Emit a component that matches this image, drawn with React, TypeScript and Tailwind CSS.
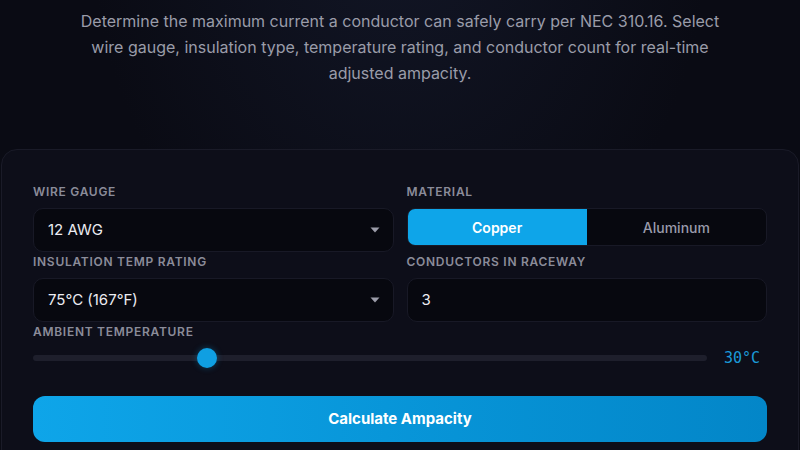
import { useState } from "react";

const labelCls =
  "mb-2 block text-[12px] font-semibold uppercase leading-4 tracking-[0.06em] text-[#8b8c99]";

function Caret() {
  return (
    <svg width="10" height="6" viewBox="0 0 10 6" className="shrink-0">
      <path d="M0.5 0.5h9L5 5.5z" fill="#9c9daa" />
    </svg>
  );
}

function SelectBox({ value }: { value: string }) {
  return (
    <div className="flex h-[44px] items-center justify-between rounded-[10px] border border-[#181926] bg-[#07080f] pl-[14px] pr-[13px] text-[15px] text-[#ececf2]">
      <span>{value}</span>
      <Caret />
    </div>
  );
}

export default function App() {
  const [material, setMaterial] = useState<"copper" | "aluminum">("copper");
  const temp = 30;
  const pct = ((temp - 10) / 80) * 100;

  return (
    <div
      className="h-[450px] w-[800px] overflow-hidden bg-[#0a0b14] bg-[radial-gradient(ellipse_at_50%_-20%,#121626_0%,#0a0b14_55%)] text-white"
      style={{ fontFamily: "Inter, 'Noto Sans', sans-serif" }}
    >
      <p className="mx-auto max-w-[660px] pt-2 text-center text-[16px] leading-[26px] text-[#9a9ca9]">
        Determine the maximum current a conductor can safely carry per NEC 310.16. Select wire
        gauge, insulation type, temperature rating, and conductor count for real-time adjusted
        ampacity.
      </p>

      <div className="mx-px mt-[63px] rounded-2xl border border-[#1a1b28] bg-[#0d0e19] px-[31px] pt-[34px] pb-8">
        <div className="grid grid-cols-2 gap-x-[13px] gap-y-0.5">
          <div>
            <label className={labelCls}>Wire Gauge</label>
            <SelectBox value="12 AWG" />
          </div>
          <div>
            <label className={labelCls}>Material</label>
            <div className="flex h-[38px] overflow-hidden rounded-lg border border-[#181926] bg-[#07080f] text-[14px]">
              <button
                type="button"
                onClick={() => setMaterial("copper")}
                className={
                  material === "copper"
                    ? "flex-1 bg-[#0ea5e9] font-semibold text-white"
                    : "flex-1 font-medium text-[#9a9bab]"
                }
              >
                Copper
              </button>
              <button
                type="button"
                onClick={() => setMaterial("aluminum")}
                className={
                  material === "aluminum"
                    ? "flex-1 bg-[#0ea5e9] font-semibold text-white"
                    : "flex-1 font-medium text-[#9a9bab]"
                }
              >
                Aluminum
              </button>
            </div>
          </div>
          <div>
            <label className={labelCls}>Insulation Temp Rating</label>
            <SelectBox value="75°C (167°F)" />
          </div>
          <div>
            <label className={labelCls}>Conductors in Raceway</label>
            <div className="flex h-[44px] items-center rounded-[10px] border border-[#181926] bg-[#07080f] pl-[14px] text-[15px] text-[#ececf2]">
              3
            </div>
          </div>
        </div>

        <div className="mt-0.5">
          <label className={labelCls}>Ambient Temperature</label>
          <div className="flex h-5 items-center gap-[17px]">
            <div className="relative h-[6px] flex-1 rounded-full bg-[#1e1f2c]">
              <div
                className="absolute top-1/2 h-5 w-5 -translate-x-1/2 -translate-y-1/2 rounded-full bg-[#0f9fe2] shadow-[0_0_6px_rgba(14,165,233,0.35)]"
                style={{ left: `calc(10px + (100% - 20px) * ${pct / 100})` }}
              />
            </div>
            <span
              className="w-[43px] text-[15px] font-medium text-[#1b9ad8]"
              style={{ fontFamily: "'DejaVu Sans Mono', monospace" }}
            >
              {temp}°C
            </span>
          </div>
        </div>

        <button
          type="button"
          className="mt-7 h-[46px] w-full rounded-xl bg-gradient-to-r from-[#0ea5e9] to-[#0386c8] text-[15px] font-bold text-white"
        >
          Calculate Ampacity
        </button>
      </div>
    </div>
  );
}
